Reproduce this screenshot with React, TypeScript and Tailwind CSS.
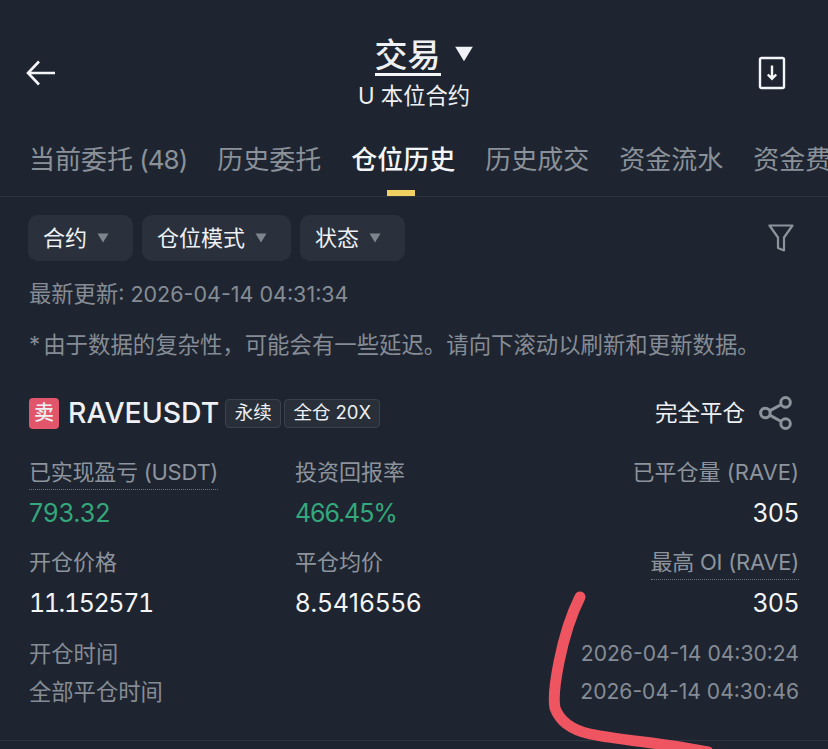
const Caret = ({ className }: { className: string }) => (
    <svg viewBox="0 0 12 10" className={className} fill="currentColor">
        <path d="M0.5 0.5h11L6 9.5z" />
    </svg>
);

const chips = [
    { label: '合约', width: 'w-[105px]' },
    { label: '仓位模式', width: 'w-[149px]' },
    { label: '状态', width: 'w-[105px]' },
];

const tabs = ['当前委托', '历史委托', '仓位历史', '历史成交', '资金流水', '资金费用'];

// one label + value column in the position card
const Stat = ({ label, value, dotted, right, valueClass }: { label: string; value: string; dotted?: boolean; right?: boolean; valueClass: string }) => (
    <div className={`flex h-[90px] flex-col ${right ? 'items-end' : 'items-start'}`}>
        <span className={`h-[35px] text-[22px] leading-[34px] text-[#8d949d] ${dotted ? 'border-b border-dotted border-[#6b727b] tracking-[-0.25px]' : ''}`}>{label}</span>
        <span className={`mt-[5px] text-[25px] leading-[36px] ${valueClass}`}>{value}</span>
    </div>
);

const App = () => {
    return (
        <div
            className="relative h-[749px] w-[828px] overflow-hidden bg-[#1e2530] text-[#eef0f3]"
            style={{ fontFamily: 'Inter, "Noto Sans CJK SC", sans-serif' }}
        >
            {/* Header */}
            <div className="flex h-[134px] items-start justify-between pl-[26px] pr-[42px]">
                <svg viewBox="0 0 30 26" className="mt-[60px] h-[26px] w-[30px]" fill="none" stroke="#f4f5f7" strokeWidth="2.6">
                    <path d="M29 13H2M13 1.5L2 13l11 11.5" />
                </svg>
                <div className="mt-[37px] flex flex-col items-center pl-[14px]">
                    <div className="flex items-center pl-[20px]">
                        <span className="border-b-[3px] border-[#f4f5f7] text-[33px] font-medium leading-[36px]">交易</span>
                        <Caret className="mb-[6px] ml-[13px] h-[16px] w-[20px] text-[#f0f2f6]" />
                    </div>
                    <span className="mt-[4px] text-[22.3px] leading-[32px]">U 本位合约</span>
                </div>
                <svg viewBox="0 0 28 34" className="mt-[56px] h-[34px] w-[28px]" fill="none" stroke="#f4f5f7" strokeWidth="2.4">
                    <rect x="2" y="2" width="24" height="30" rx="1.5" />
                    <path d="M14 9.5v13M9.8 18.5L14 22.7l4.2-4.2" />
                </svg>
            </div>

            {/* Tabs */}
            <div className="flex h-[63px] items-start gap-[30px] overflow-hidden whitespace-nowrap border-b border-[#2e3540] pl-[29px]">
                {tabs.map((tab, i) => (
                    <div key={tab} className="relative h-[62px] shrink-0">
                        <span className={`text-[26px] leading-[52px] ${i === 2 ? 'font-medium text-[#f4f5f7]' : 'text-[#8b9199]'}`}>
                            {tab}
                            {i === 0 && <span className="tracking-[-1px]"> (48)</span>}
                        </span>
                        {i === 2 && <div className="absolute bottom-0 left-[36px] h-[6px] w-[28px] bg-[#f0d060]" />}
                    </div>
                ))}
            </div>

            {/* Filters */}
            <div className="flex items-center justify-between pl-[28px] pr-[34px] pt-[18px]">
                <div className="flex gap-[9px]">
                    {chips.map((chip) => (
                        <div key={chip.label} className={`flex h-[46px] items-center gap-[9px] rounded-[10px] bg-[#2a313c] pl-[15px] ${chip.width}`}>
                            <span className="text-[22px] leading-none">{chip.label}</span>
                            <Caret className="h-[10px] w-[14px] text-[#7f858e]" />
                        </div>
                    ))}
                </div>
                <svg viewBox="0 0 26 28" className="h-[28px] w-[26px]" fill="none" stroke="#8d939b" strokeWidth="2.2" strokeLinejoin="round">
                    <path d="M1.5 1.5h23L16 13.5v13l-6-2.5V13.5z" />
                </svg>
            </div>

            <div className="pl-[29px] pt-[16px] text-[21.5px] leading-[34px] text-[#868c95]">
                <span className="text-[22.3px]">最新更新</span>: 2026-04-14 04:31:34
            </div>
            <div className="flex whitespace-nowrap pl-[29px] pt-[17px] text-[22.4px] leading-[34px] text-[#868c95]">
                <span className="mr-[3px]">*</span>
                <span>由于数据的复杂性，可能会有一些延迟。请向下滚动以刷新和更新数据。</span>
            </div>

            {/* Position card */}
            <div className="px-[29px] pt-[33px]">
                <div className="flex h-[36px] items-center">
                    <span className="flex h-[31px] w-[30px] items-center justify-center rounded-[4px] bg-[#e2566b] text-[20px] font-medium">卖</span>
                    <span className="ml-[9px] text-[28.4px] font-medium leading-none">RAVEUSDT</span>
                    <span className="ml-[6px] flex h-[29px] w-[56px] items-center justify-center rounded-[4px] border border-[#3b424d] bg-[#282f39] text-[18.5px]">永续</span>
                    <span className="ml-[3px] flex h-[29px] w-[96px] items-center justify-center rounded-[4px] border border-[#3b424d] bg-[#282f39] text-[18.5px]">全仓 20X</span>
                    <span className="ml-auto text-[22.5px]">完全平仓</span>
                    <svg viewBox="0 0 32 32" className="ml-[14px] mr-[6px] h-[34px] w-[34px]" fill="none" stroke="#8d939b" strokeWidth="2.8">
                        <circle cx="25" cy="6" r="4.5" />
                        <circle cx="6" cy="16" r="4.5" />
                        <circle cx="25" cy="26" r="4.5" />
                        <path d="M10 14l11-6M10 18l11 6" />
                    </svg>
                </div>

                <div className="mt-[24px] grid grid-cols-[266px_1fr_auto]">
                    <Stat label="已实现盈亏 (USDT)" value="793.32" dotted valueClass="text-[#34a77c]" />
                    <Stat label="投资回报率" value="466.45%" valueClass="text-[#34a77c] tracking-[-1.1px]" />
                    <Stat label="已平仓量 (RAVE)" value="305" right valueClass="text-[#f4f5f7]" />
                    <Stat label="开仓价格" value="11.152571" valueClass="text-[#f4f5f7] tabular-nums tracking-[-1.4px]" />
                    <Stat label="平仓均价" value="8.5416556" valueClass="text-[#f4f5f7] tracking-[0.3px]" />
                    <Stat label="最高 OI (RAVE)" value="305" dotted right valueClass="text-[#f4f5f7]" />
                </div>

                <div className="flex h-[38px] items-center justify-between text-[#868c95]">
                    <span className="text-[22.3px]">开仓时间</span>
                    <span className="text-[21.1px]">2026-04-14 04:30:24</span>
                </div>
                <div className="flex h-[38px] items-center justify-between text-[#868c95]">
                    <span className="text-[22.3px]">全部平仓时间</span>
                    <span className="text-[21.1px]">2026-04-14 04:30:46</span>
                </div>
            </div>
            <div className="mt-[29px] border-t border-[#2e3540]" />

            {/* Red marker scribble drawn over the screenshot */}
            <svg viewBox="0 0 828 749" className="pointer-events-none absolute inset-0 h-[749px] w-[828px]" fill="none">
                <path
                    d="M580 597C571 615 564 637 559 662C555 682 553 698 555 708C560 722 572 730 590 734C625 741 665 743 708 752"
                    stroke="#ee5560"
                    strokeWidth="11"
                    strokeLinecap="round"
                />
            </svg>
        </div>
    );
};

export default App;
